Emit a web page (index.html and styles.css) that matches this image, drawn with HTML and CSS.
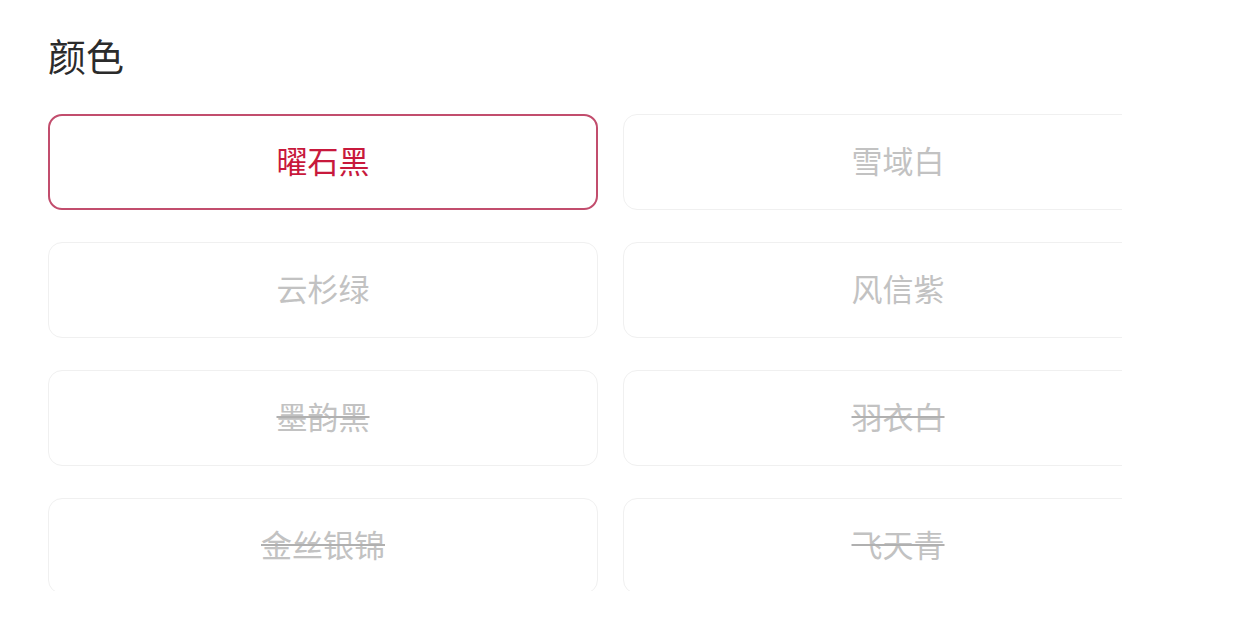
FILE: index.html
```html
<!DOCTYPE html>
<html lang="zh">
<head>
    <meta charset="UTF-8">
    <meta name="viewport" content="width=device-width, initial-scale=1.0">
    <title>颜色</title>
    <link rel="stylesheet" href="styles.css">
</head>
<body>
    <div class="panel">
        <h2 class="panel-title">颜色</h2>
        <div class="options-frame">
            <div class="options">
                <div class="option selected">曜石黑</div>
                <div class="option">雪域白</div>
                <div class="option">云杉绿</div>
                <div class="option">风信紫</div>
                <div class="option sold-out">墨韵黑</div>
                <div class="option sold-out">羽衣白</div>
                <div class="option sold-out">金丝银锦</div>
                <div class="option sold-out">飞天青</div>
            </div>
        </div>
    </div>
</body>
</html>
```

FILE: styles.css
```css
body {
    margin: 0;
    background-color: #fff;
    font-family: "Noto Sans CJK SC", "Noto Sans", sans-serif;
}

.panel {
    padding: 27px 0 0 48px;
}

.panel-title {
    margin: 0 0 31px 0;
    font-size: 38px;
    font-weight: 400;
    line-height: 56px;
    color: #2b2b2b;
}

.options-frame {
    width: 1074px;
    height: 477px;
    overflow: hidden;
}

.options {
    display: grid;
    grid-template-columns: 550px 550px;
    column-gap: 25px;
    row-gap: 32px;
}

.option {
    height: 96px;
    box-sizing: border-box;
    padding-bottom: 6px;
    border: 1px solid #f0f0f0;
    border-radius: 14px;
    display: flex;
    align-items: center;
    justify-content: center;
    font-size: 31px;
    color: #c2c2c2;
}

.option.selected {
    border: 2px solid #c24d6d;
    color: #c8193c;
}

.option.sold-out {
    text-decoration: line-through;
    text-decoration-color: #b0b0b0;
    text-decoration-thickness: 2px;
}
```
